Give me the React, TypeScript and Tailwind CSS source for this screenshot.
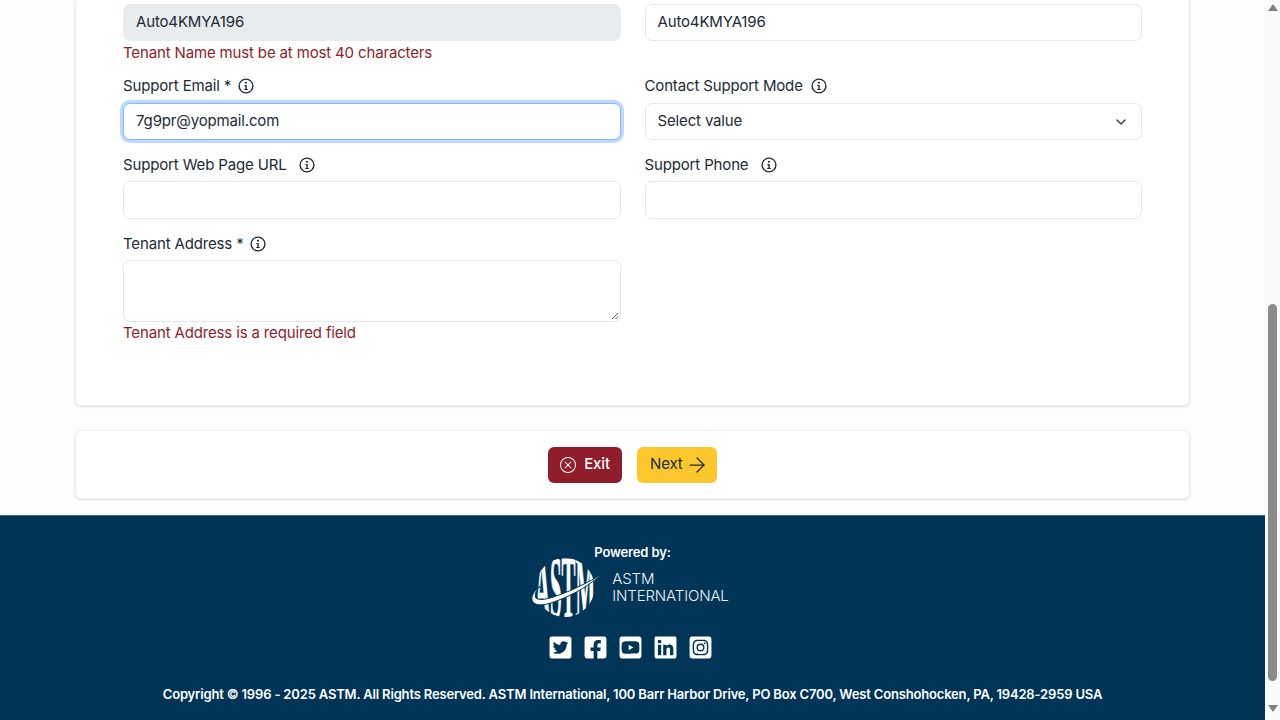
import React from 'react'
import { BsXCircle } from 'react-icons/bs'
import { FaTwitterSquare, FaFacebookSquare, FaYoutubeSquare, FaLinkedin, FaInstagramSquare } from 'react-icons/fa'
import { ChevronDown, ArrowRight } from 'lucide-react'

const Info = ({ className }: { className: string }) => (
    <svg width="16" height="16" viewBox="0 0 16 16" className={`text-[#212a35] ${className}`}>
        <circle cx="8" cy="8" r="6.9" fill="none" stroke="currentColor" strokeWidth="1.4" />
        <circle cx="8" cy="4.8" r="1.05" fill="currentColor" />
        <path d="M6.3 7 H8.7 V11 H9.8 V12.1 H6.2 V11 H7.3 V8.1 H6.3 Z" fill="currentColor" />
    </svg>
)

const labelCls = "flex items-center h-[18px] text-[15px] leading-[18px] text-[#212a35]"
const inputCls = "w-full border rounded-[7px] px-3 flex items-center text-[15px] text-[#212a35]"
const errorCls = "h-[18px] text-[15px] leading-[18px] text-[#8f1d2c]"

const AstmLogo = () => (
    <svg width="72" height="60" viewBox="0 0 72 60" className="block">
        <defs>
            <clipPath id="astm-disc">
                <circle cx="34" cy="30.5" r="29.5" />
            </clipPath>
        </defs>
        <g clipPath="url(#astm-disc)">
            <text transform="translate(34 60) scale(1 1.95)" textAnchor="middle" fontFamily="Liberation Serif" fontWeight="700" fontSize="46" fill="#fff" stroke="#fff" strokeWidth="0.5" textLength="60" lengthAdjust="spacingAndGlyphs">ASTM</text>
        </g>
        <path d="M9 29 C2 35 -1 41 2 45 C6 50 16 48 28 43 C44 37 60 27 71 17 C58 25 42 33 28 38 C18 42 8 44 5 41 C3 38 5 34 9 29 Z" fill="#fff" stroke="#003558" strokeWidth="1" />
    </svg>
)

const App: React.FC = () => {
    return (
        <div className="flex h-screen w-full overflow-hidden bg-white tracking-[-0.15px] font-['Inter','Liberation_Sans',sans-serif]">
            <div className="flex-1 flex flex-col bg-[#fdfdfd]">
                <div className="mx-[75px] bg-white rounded-b-md border border-t-0 border-[#eceef0] shadow-sm px-[47px] pt-1 h-[406px]">
                    <div className="grid grid-cols-2 gap-x-6">
                        <div>
                            <div className={`${inputCls} h-[37px] bg-[#e9ecef] border-[#e9ecef]`}>Auto4KMYA196</div>
                            <div className={`${errorCls} mt-[3px]`}>Tenant Name must be at most 40 characters</div>
                        </div>
                        <div>
                            <div className={`${inputCls} h-[37px] bg-white border-[#e5e7eb]`}>Auto4KMYA196</div>
                        </div>
                    </div>
                    <div className="grid grid-cols-2 gap-x-6 mt-[15px]">
                        <div>
                            <div className={labelCls}>Support Email *<Info className="ml-[7px]" /></div>
                            <div className={`${inputCls} h-[37px] mt-2 bg-white border-[#86b7fe] ring-[3px] ring-[#bfd9fe]`}>7g9pr@yopmail.com</div>
                        </div>
                        <div>
                            <div className={labelCls}>Contact Support Mode<Info className="ml-2" /></div>
                            <div className={`${inputCls} h-[37px] mt-2 bg-white border-[#e5e7eb] justify-between`}>
                                Select value
                                <ChevronDown className="w-4 h-4 text-[#343a40]" strokeWidth={2} />
                            </div>
                        </div>
                    </div>
                    <div className="grid grid-cols-2 gap-x-6 mt-[16px]">
                        <div>
                            <div className={labelCls}>Support Web Page URL<Info className="ml-3" /></div>
                            <div className={`${inputCls} h-[38px] mt-[7px] bg-white border-[#e5e7eb]`}></div>
                        </div>
                        <div>
                            <div className={labelCls}>Support Phone<Info className="ml-[13px]" /></div>
                            <div className={`${inputCls} h-[38px] mt-[7px] bg-white border-[#e5e7eb]`}></div>
                        </div>
                    </div>
                    <div className="grid grid-cols-2 gap-x-6 mt-[16px]">
                        <div>
                            <div className={labelCls}>Tenant Address *<Info className="ml-[6px]" /></div>
                            <div className={`${inputCls} relative h-[62px] mt-[7px] bg-white border-[#e5e7eb]`}>
                                <svg width="8" height="8" viewBox="0 0 8 8" className="absolute right-[1px] bottom-[1px]">
                                    <path d="M1 7 L7 1 M4.5 7 L7 4.5" stroke="#555" strokeWidth="1" />
                                </svg>
                            </div>
                            <div className={`${errorCls} mt-[2px]`}>Tenant Address is a required field</div>
                        </div>
                    </div>
                </div>
                <div className="mx-[75px] mt-[24px] h-[69px] bg-white rounded-md border border-[#eceef0] shadow-sm flex items-center justify-center gap-[15px]">
                    <button className="h-9 w-[74px] rounded-md bg-[#8f1d2c] text-white text-[15px] font-medium flex items-center justify-center gap-2">
                        <BsXCircle className="w-4 h-4" />Exit
                    </button>
                    <button className="h-9 w-[80px] rounded-md bg-[#fcc62d] text-[#212a35] text-[15px] flex items-center pl-[13px] gap-[2px]">
                        Next<ArrowRight className="w-6 h-6 shrink-0" strokeWidth={1.25} />
                    </button>
                </div>
                <div className="mt-4 flex-1 bg-[#003558] border-t border-[#3d6a8a] flex flex-col items-center text-white">
                    <div className="mt-[28px] h-4 text-[13px] leading-4 font-semibold">Powered by:</div>
                    <div className="flex items-center mt-[-3px] mr-[5px]">
                        <AstmLogo />
                        <div className="ml-[9px] text-[15px] leading-[17px] font-light text-[#eef2f5] whitespace-nowrap">
                            <div>ASTM</div>
                            <div>INTERNATIONAL</div>
                        </div>
                    </div>
                    <div className="flex items-center gap-[10px] mt-[18px] mr-[4px]">
                        <FaTwitterSquare className="w-[25px] h-[25px]" />
                        <FaFacebookSquare className="w-[25px] h-[25px]" />
                        <FaYoutubeSquare className="w-[25px] h-[25px]" />
                        <FaLinkedin className="w-[25px] h-[25px]" />
                        <FaInstagramSquare className="w-[25px] h-[25px]" />
                    </div>
                    <div className="mt-[26px] text-[13px] leading-4 font-semibold tracking-[-0.17px] whitespace-nowrap">Copyright © 1996 - 2025 ASTM. All Rights Reserved. ASTM International, 100 Barr Harbor Drive, PO Box C700, West Conshohocken, PA, 19428-2959 USA</div>
                </div>
            </div>
            <div className="w-[15px] bg-[#fafafa] flex flex-col items-center">
                <div className="mt-[4px] w-0 h-0 border-x-[5px] border-x-transparent border-b-[7px] border-b-[#7f7f7f]"></div>
                <div className="mt-[293px] w-[9px] h-[377px] bg-[#8b8b8b] rounded-full"></div>
                <div className="mt-[24px] w-0 h-0 border-x-[5px] border-x-transparent border-t-[7px] border-t-[#7f7f7f]"></div>
            </div>
        </div>
    )
}

export default App
